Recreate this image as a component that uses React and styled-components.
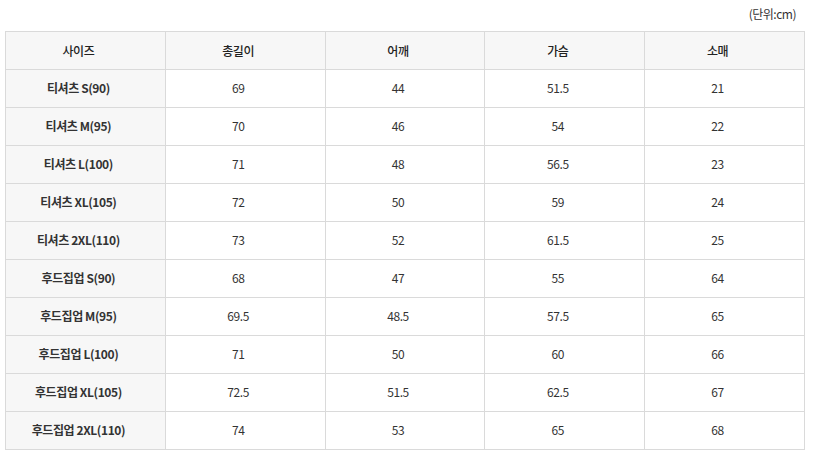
import React from "react";
import styled, { createGlobalStyle } from "styled-components";

const GlobalStyle = createGlobalStyle`
  body {
    margin: 0;
    background: #fff;
    font-family: "Noto Sans CJK KR", "Noto Sans", sans-serif;
    color: #333;
  }
`;

const Page = styled.div`
  width: 814px;
  padding: 5px 10px 0 5px;
  box-sizing: border-box;
`;

const Unit = styled.p`
  margin: 0 0 8px;
  height: 18px;
  line-height: 18px;
  text-align: right;
  padding-right: 8px;
  font-size: 12px;
  letter-spacing: -0.5px;
  color: #333;
`;

const Table = styled.table`
  width: 800px;
  border-collapse: collapse;
  table-layout: fixed;
  font-size: 12px;
  letter-spacing: -0.4px;
`;

const Th = styled.th`
  height: 37px;
  padding: 0 14px 0 0;
  border: 1px solid #dadada;
  background: #f7f7f7;
  font-weight: 500;
  color: #222;
  text-align: center;
`;

const Td = styled.td`
  height: 35px;
  padding: 0 14px 2px 0;
  border: 1px solid #dadada;
  text-align: center;
  color: #333;
  background: ${(p) => (p.$label ? "#f7f7f7" : "#fff")};
  font-weight: ${(p) => (p.$label ? 700 : 400)};
`;

const columns = ["사이즈", "총길이", "어깨", "가슴", "소매"];

const rows = [
  ["티셔츠 S(90)", "69", "44", "51.5", "21"],
  ["티셔츠 M(95)", "70", "46", "54", "22"],
  ["티셔츠 L(100)", "71", "48", "56.5", "23"],
  ["티셔츠 XL(105)", "72", "50", "59", "24"],
  ["티셔츠 2XL(110)", "73", "52", "61.5", "25"],
  ["후드집업 S(90)", "68", "47", "55", "64"],
  ["후드집업 M(95)", "69.5", "48.5", "57.5", "65"],
  ["후드집업 L(100)", "71", "50", "60", "66"],
  ["후드집업 XL(105)", "72.5", "51.5", "62.5", "67"],
  ["후드집업 2XL(110)", "74", "53", "65", "68"],
];

export default function App() {
  return (
    <Page>
      <GlobalStyle />
      <Unit>(단위:cm)</Unit>
      <Table>
        <thead>
          <tr>
            {columns.map((c) => (
              <Th key={c}>{c}</Th>
            ))}
          </tr>
        </thead>
        <tbody>
          {rows.map((r) => (
            <tr key={r[0]}>
              {r.map((v, i) => (
                <Td key={i} $label={i === 0}>
                  {v}
                </Td>
              ))}
            </tr>
          ))}
        </tbody>
      </Table>
    </Page>
  );
}
